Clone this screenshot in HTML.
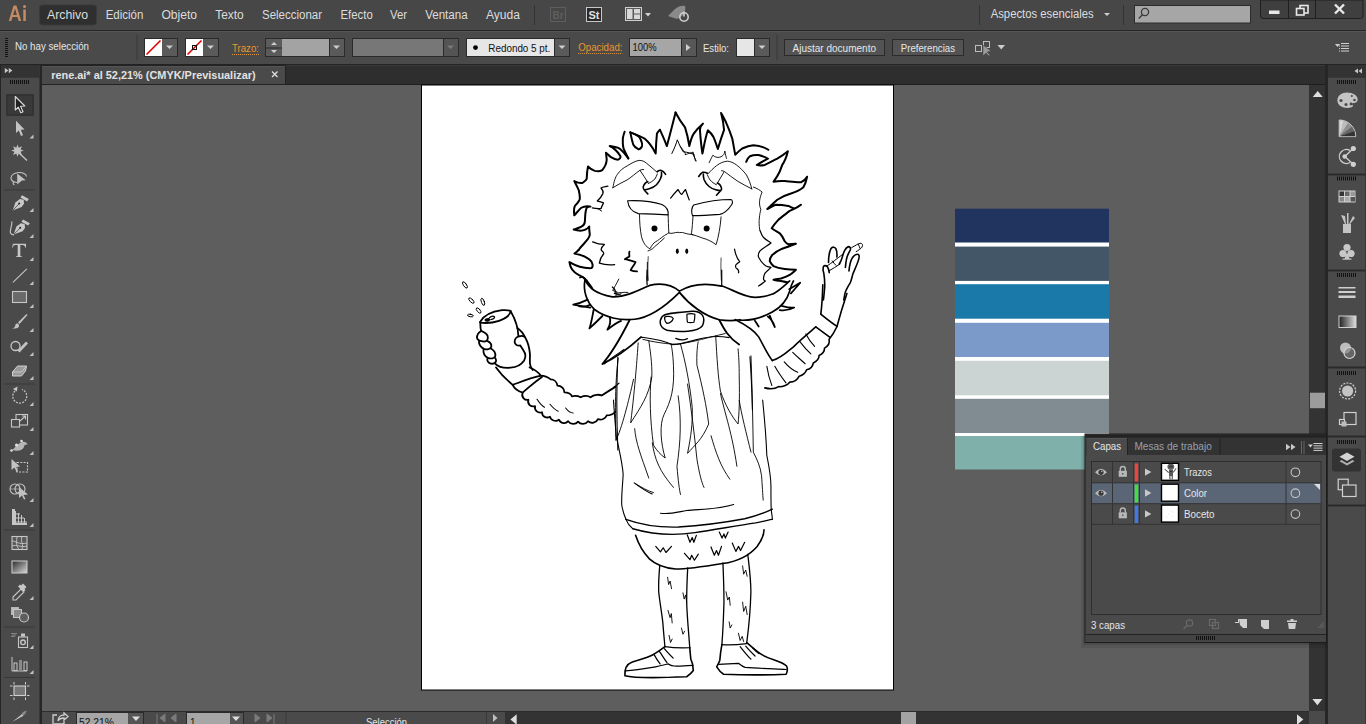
<!DOCTYPE html>
<html><head><meta charset="utf-8">
<style>
html,body{margin:0;padding:0;width:1366px;height:724px;overflow:hidden;background:#5e5e5e;}
svg{display:block;font-family:"Liberation Sans",sans-serif;}
.mt{fill:#dcdcdc;font-size:12.3px;}
.ct{fill:#e6e6e6;font-size:10px;}
.ic{fill:#b4b4b4;}
</style></head><body>
<svg width="1366" height="724" viewBox="0 0 1366 724">
<!-- ===== MENU BAR ===== -->
<rect x="0" y="0" width="1366" height="30" fill="#474747"/>
<rect x="0" y="30" width="1366" height="1" fill="#262626"/>
<path d="M8.8 21 L13.6 5.6 H16.4 L21.2 21 H18.7 L17.5 17 H12.5 L11.3 21 Z M13.1 14.9 H16.9 L15 8.4 Z" fill="#c58b63"/><rect x="23.3" y="9.5" width="2.5" height="11.5" fill="#c58b63"/><circle cx="24.55" cy="6.5" r="1.55" fill="#c58b63"/>
<rect x="39.5" y="5" width="57" height="20" rx="3" fill="#2f2f2f" stroke="#3a3a3a" stroke-width="1"/>
<text class="mt" x="47" y="19" textLength="41" lengthAdjust="spacingAndGlyphs">Archivo</text>
<text class="mt" x="105.7" y="19" textLength="37.7" lengthAdjust="spacingAndGlyphs">Edición</text>
<text class="mt" x="161.4" y="19" textLength="35.7" lengthAdjust="spacingAndGlyphs">Objeto</text>
<text class="mt" x="215.2" y="19" textLength="28.5" lengthAdjust="spacingAndGlyphs">Texto</text>
<text class="mt" x="262" y="19" textLength="60" lengthAdjust="spacingAndGlyphs">Seleccionar</text>
<text class="mt" x="340.5" y="19" textLength="32.3" lengthAdjust="spacingAndGlyphs">Efecto</text>
<text class="mt" x="390" y="19" textLength="17" lengthAdjust="spacingAndGlyphs">Ver</text>
<text class="mt" x="425.2" y="19" textLength="42.4" lengthAdjust="spacingAndGlyphs">Ventana</text>
<text class="mt" x="486" y="19" textLength="34" lengthAdjust="spacingAndGlyphs">Ayuda</text>
<rect x="534" y="5" width="1" height="20" fill="#333"/>
<rect x="979" y="5" width="1" height="20" fill="#333"/>
<rect x="1123" y="5" width="1" height="20" fill="#333"/>
<text class="mt" x="990.7" y="18" textLength="103" lengthAdjust="spacingAndGlyphs">Aspectos esenciales</text>
<path d="M1104 13h6l-3 3z" fill="#cfcfcf"/>
<rect x="1134.5" y="5.5" width="116" height="17.5" fill="#a6a6a6" stroke="#2c2c2c" stroke-width="1"/>
<circle cx="1145" cy="12" r="3.6" fill="none" stroke="#3a3a3a" stroke-width="1.3"/>
<path d="M1142.4 14.8 l-3.6 3.8" stroke="#3a3a3a" stroke-width="1.4"/>
<!-- Br / St / layout / rocket -->
<rect x="550.5" y="7.5" width="15" height="14" fill="none" stroke="#5e5e5e" stroke-width="1"/>
<text x="552.5" y="18.5" font-size="10px" font-weight="bold" fill="#5e5e5e" textLength="11" lengthAdjust="spacingAndGlyphs">Br</text>
<rect x="586.5" y="7.5" width="15" height="14" fill="#2a2a2a" stroke="#c8c8c8" stroke-width="1"/>
<text x="588.5" y="18.5" font-size="10px" font-weight="bold" fill="#e0e0e0" textLength="11" lengthAdjust="spacingAndGlyphs">St</text>
<rect x="625.5" y="7.5" width="16" height="13" fill="#5a5a5a" stroke="#cfcfcf" stroke-width="1"/>
<rect x="627" y="9" width="5.5" height="10" fill="#d8d8d8"/>
<rect x="634" y="9" width="6" height="4.5" fill="#d8d8d8"/>
<rect x="634" y="14.5" width="6" height="4.5" fill="#d8d8d8"/>
<path d="M645 13h6l-3 3.5z" fill="#d0d0d0"/>
<path d="M668 16 l7 -7 c3 -3 8 -4 10 -3 c1 2 0 7 -3 10 l-5 3 z" fill="#8a8a8a"/>
<circle cx="684" cy="17" r="4.2" fill="none" stroke="#cfcfcf" stroke-width="1.6"/>
<path d="M684 11.5 v5" stroke="#cfcfcf" stroke-width="1.6"/>


<!-- window buttons -->
<path d="M1260.5 0 V16 a2.5 2.5 0 0 0 2.5 2.5 H1360.5 a2.5 2.5 0 0 0 2.5 -2.5 V0 Z" fill="#3f3f3f" stroke="#1f1f1f" stroke-width="1"/>
<rect x="1288" y="0" width="1" height="18" fill="#1f1f1f"/>
<rect x="1315" y="0" width="1" height="18" fill="#1f1f1f"/>
<rect x="1269" y="10.5" width="10.5" height="3.5" fill="#e8e8e8"/>
<rect x="1300" y="5.5" width="8" height="7.5" fill="none" stroke="#e8e8e8" stroke-width="1.6"/>
<rect x="1296.5" y="8.5" width="7.5" height="6.5" fill="#3f3f3f" stroke="#e8e8e8" stroke-width="1.6"/>
<path d="M1335 4.5 l9 9 M1344 4.5 l-9 9" stroke="#e8e8e8" stroke-width="2.4"/>

<!-- ===== CONTROL BAR ===== -->
<rect x="0" y="31" width="1366" height="33" fill="#4a4a4a"/>
<rect x="0" y="31" width="1366" height="1" fill="#555"/>
<rect x="0" y="64" width="1366" height="1" fill="#232323"/>
<g fill="#141414"><rect x="5" y="38" width="3" height="1"/><rect x="5" y="40" width="3" height="1"/><rect x="5" y="42" width="3" height="1"/><rect x="5" y="44" width="3" height="1"/><rect x="5" y="46" width="3" height="1"/><rect x="5" y="48" width="3" height="1"/><rect x="5" y="50" width="3" height="1"/><rect x="5" y="52" width="3" height="1"/><rect x="5" y="54" width="3" height="1"/><rect x="5" y="56" width="3" height="1"/></g>
<text class="ct" x="15" y="49.7" textLength="74" lengthAdjust="spacingAndGlyphs">No hay selección</text>
<rect x="136.5" y="35" width="1" height="25" fill="#383838"/>
<!-- fill swatch -->
<rect x="144.5" y="38.5" width="33" height="18" fill="#5a5a5a" stroke="#2a2a2a"/>
<rect x="145" y="39" width="17" height="17" fill="#fff"/>
<path d="M146.5 54.5 L160.5 40.5" stroke="#e00000" stroke-width="1.6"/>
<path d="M166 45.5h7l-3.5 3.5z" fill="#cdcdcd"/>
<!-- stroke swatch -->
<rect x="185.5" y="38.5" width="33" height="18" fill="#5a5a5a" stroke="#2a2a2a"/>
<rect x="186" y="39" width="17" height="17" fill="#fff"/>
<path d="M187.5 54.5 L201.5 40.5" stroke="#e00000" stroke-width="1.6"/>
<rect x="192.5" y="45.5" width="4" height="4" fill="none" stroke="#111" stroke-width="1"/>
<path d="M207 45.5h7l-3.5 3.5z" fill="#cdcdcd"/>
<text x="232" y="52" font-size="10px" fill="#e8962e" textLength="27" lengthAdjust="spacingAndGlyphs">Trazo:</text>
<path d="M232 54.5h27" stroke="#e8962e" stroke-width="1" stroke-dasharray="1 1"/>
<rect x="265.5" y="38.5" width="79" height="18" fill="#5a5a5a" stroke="#2a2a2a"/>
<rect x="266" y="39" width="16" height="8.5" fill="#5c5c5c"/>
<rect x="266" y="47.5" width="16" height="1" fill="#2a2a2a"/>
<path d="M271 45h6l-3-3z M271 50h6l-3 3z" fill="#d0d0d0"/>
<rect x="282" y="39" width="47" height="17" fill="#a3a3a3"/>
<rect x="329" y="39" width="1" height="17" fill="#2a2a2a"/>
<path d="M333 45.5h7l-3.5 3.5z" fill="#cdcdcd"/>
<!-- disabled field -->
<rect x="352.5" y="38.5" width="106" height="18" fill="#545454" stroke="#2a2a2a"/>
<rect x="353" y="39" width="90" height="17" fill="#777"/>
<rect x="443" y="39" width="1" height="17" fill="#2a2a2a"/>
<path d="M447 45.5h7l-3.5 3.5z" fill="#7a7a7a"/>
<!-- brush -->
<rect x="466.5" y="38.5" width="103" height="18" fill="#5a5a5a" stroke="#2a2a2a"/>
<rect x="467" y="39" width="87" height="17" fill="#e6e6e6"/>
<rect x="554" y="39" width="1" height="17" fill="#2a2a2a"/>
<circle cx="475.5" cy="47.6" r="2.4" fill="#000"/>
<text x="488.3" y="51.6" font-size="10px" fill="#111" textLength="62" lengthAdjust="spacingAndGlyphs">Redondo 5 pt.</text>
<path d="M558.5 45.5h7l-3.5 3.5z" fill="#cdcdcd"/>
<text x="578.2" y="50.8" font-size="10px" fill="#e8962e" textLength="44.3" lengthAdjust="spacingAndGlyphs">Opacidad:</text>
<path d="M578.2 53.5h44.3" stroke="#e8962e" stroke-width="1" stroke-dasharray="1 1"/>
<rect x="629.5" y="38.5" width="67" height="18" fill="#575757" stroke="#2a2a2a"/>
<rect x="630" y="39" width="51" height="17" fill="#a6a6a6"/>
<rect x="681" y="39" width="1" height="17" fill="#2a2a2a"/>
<text x="632.5" y="50.8" font-size="10px" fill="#111" textLength="24" lengthAdjust="spacingAndGlyphs">100%</text>
<path d="M686 44v7l4.5-3.5z" fill="#cdcdcd"/>
<text class="ct" x="703" y="51.6" textLength="26" lengthAdjust="spacingAndGlyphs">Estilo:</text>
<rect x="736.5" y="38.5" width="33" height="18" fill="#5a5a5a" stroke="#2a2a2a"/>
<rect x="737" y="39" width="17" height="17" fill="#e6e6e6"/>
<rect x="754" y="39" width="1" height="17" fill="#2a2a2a"/>
<path d="M758.5 45.5h7l-3.5 3.5z" fill="#cdcdcd"/>
<rect x="776.5" y="35" width="1" height="25" fill="#383838"/>
<rect x="784.5" y="39.5" width="100" height="16" fill="#535353" stroke="#2a2a2a"/>
<text class="ct" x="792.5" y="51.8" textLength="83.5" lengthAdjust="spacingAndGlyphs">Ajustar documento</text>
<rect x="892.5" y="39.5" width="71" height="16" fill="#535353" stroke="#2a2a2a"/>
<text class="ct" x="900.8" y="51.8" textLength="54.2" lengthAdjust="spacingAndGlyphs">Preferencias</text>
<g fill="none" stroke="#bdbdbd" stroke-width="1"><rect x="975.5" y="45.5" width="6" height="6"/><rect x="983.5" y="41.5" width="6" height="6"/></g>
<path d="M983 45 L983 56 L986 53 L989 56 L990 55 L987 52 L991 51 Z" fill="#9a9a9a" stroke="#444" stroke-width="0.5"/>
<path d="M997.5 45h7.5l-3.75 4.5z" fill="#cdcdcd"/>
<g fill="#d0d0d0"><path d="M1335 44h5l-2.5 3z"/><rect x="1341" y="43" width="8" height="1"/><rect x="1341" y="45.5" width="8" height="1"/><rect x="1341" y="48" width="8" height="1"/><rect x="1341" y="50.5" width="8" height="1"/><rect x="1339" y="45.5" width="1" height="1"/><rect x="1339" y="48" width="1" height="1"/><rect x="1339" y="50.5" width="1" height="1"/></g>

<!-- ===== TAB BAR ===== -->
<rect x="0" y="65" width="1366" height="20" fill="#2e2e2e"/>
<rect x="42" y="84" width="1283" height="1" fill="#1e1e1e"/>
<rect x="42" y="65" width="1283" height="1" fill="#393939"/>
<rect x="41.5" y="65.5" width="244" height="19" fill="#4a4a4a" stroke="#232323"/>
<rect x="42" y="66" width="243" height="1" fill="#545454"/>
<text x="51.2" y="78.7" font-size="10px" font-weight="bold" fill="#e2e2e2" textLength="204.4" lengthAdjust="spacingAndGlyphs">rene.ai* al 52,21% (CMYK/Previsualizar)</text>
<path d="M272 71.5l5.5 5.5M277.5 71.5l-5.5 5.5" stroke="#e0e0e0" stroke-width="1.3"/>

<!-- ===== PASTEBOARD ===== -->
<rect x="42" y="85" width="1267" height="626" fill="#5e5e5e"/>
<rect x="421.5" y="85" width="472" height="605" fill="#ffffff" stroke="#000" stroke-width="1"/>
<!--DRAWING-->
<!-- R1: origin 555,105 scale 4.022 -->
<g transform="translate(555,105) scale(0.24863)" fill="none" stroke="#000" stroke-linecap="round" stroke-linejoin="round">
 <g stroke-width="2" vector-effect="non-scaling-stroke">
  <path vector-effect="non-scaling-stroke" stroke-width="2" d="M95,583 C110,560 140,540 140,521 C138,505 137,495 137.6,488.7 C125,505 105,510 75,501 C95,495 118,490 120,470 C122,450 120,430 127.6,413.7 C132,410 138,409 142.6,408.7 C125,405 105,410 100,418.7 C92,428 82,438 77.6,443.7 C76,430 75,415 80,406 C90,395 100,385 100,376 C100,360 97,350 95,341 C88,325 82,315 77.6,306 C85,310 100,315 110,313.7 C122,305 127,300 127.6,296 C128,280 130,260 132.8,247.5 C140,255 150,262 160,265 C175,268 185,265 190,262 C200,250 207,235 208,220 C207,210 206,200 205,192 C212,198 218,205 225,210 C235,216 245,220 252.8,220 C262,218 265,210 262.8,205 C250,185 235,172 220,165 C235,168 245,170 255,172.5 C265,178 270,185 275,190 C283,200 290,208 295,215"/>
  <path vector-effect="non-scaling-stroke" stroke-width="2" d="M280,107.5 C274,125 272,135 272.8,140 C272,160 274,172 277.8,180 C284,195 290,205 295,215"/>
  <path vector-effect="non-scaling-stroke" stroke-width="2" d="M302.8,110 C318,115 332,122 340,130 C348,145 352,158 350,165 C346,175 340,178 335,177.5 C325,173 318,166 315,160 C310,145 306,125 302.8,110 Z"/>
  <path vector-effect="non-scaling-stroke" stroke-width="2" d="M302.8,110 C330,120 350,128 360,135 C378,150 395,175 405,195 C406,165 408,135 410,115 C414,108 418,103 422,100"/>
  <path vector-effect="non-scaling-stroke" stroke-width="2" d="M422,100 C432,120 442,145 450,165 C462,120 475,70 485,30"/>
 </g>
 <g>
  <path vector-effect="non-scaling-stroke" stroke-width="1.1" d="M292,385 C340,383 400,390 430,400 C450,410 457,425 455,442 C420,440 370,438 335,437 C310,430 295,410 292,385 Z"/>
  <path vector-effect="non-scaling-stroke" stroke-width="0.9" d="M340,440 C340,470 342,500 348,530 C355,555 365,570 382,578 C390,565 395,555 405,550 C415,545 425,535 440,525 C450,520 455,515 458,515 C456,490 456,460 455,442"/>
  <path vector-effect="non-scaling-stroke" stroke-width="0.9" d="M458,515 C470,520 480,512 495,512 C505,515 510,510 520,515 C535,520 545,520 555,522"/>
  <path vector-effect="non-scaling-stroke" stroke-width="1.2" d="M465,375 C475,362 485,350 495,340 C500,350 505,358 510,360 C515,352 520,345 525,340 C530,355 535,370 540,382"/>
  <path vector-effect="non-scaling-stroke" stroke-width="0.7" d="M375,610 C373,640 373,670 375,705"/>
  <path vector-effect="non-scaling-stroke" stroke-width="1" d="M470,195 C480,175 488,155 492,140 C500,160 508,175 515,188 C535,190 550,195 560,200 M555,190 C560,205 562,215 565,225 "/>
 </g>
 <g fill="#000" stroke="none">
  <circle cx="400" cy="497" r="12"/>
  <ellipse cx="492" cy="588" rx="6" ry="11"/>
  <ellipse cx="530" cy="588" rx="6" ry="11"/>
 </g>
</g>

<!-- R2: origin 690,105 scale 4.022 -->
<g transform="translate(690,105) scale(0.24863)" fill="none" stroke="#000" stroke-linecap="round" stroke-linejoin="round">
  <path vector-effect="non-scaling-stroke" stroke-width="2" d="M-58,30 C-45,55 -28,80 -20,90 C-10,120 -5,150 -2.7,165 C2,145 8,125 15,115 C25,100 40,85 52,75 C45,82 40,90 40,100 C42,130 46,170 50,195 C56,165 63,125 72,102 C82,110 90,120 95,130 C102,145 108,165 112,177 C120,150 128,125 137,100 C135,75 130,50 125,32 C135,50 142,62 147,75 C158,100 165,120 170,135 C175,160 178,180 182,200 C192,190 200,182 210,175 C225,168 240,163 255,162 C275,163 300,170 315,180"/>
  <path vector-effect="non-scaling-stroke" stroke-width="2" d="M226,228.5 C230,218 235,210 241,206 C255,200 265,200 276,201 C290,205 305,210 313.6,216 C300,222 292,228 286,231 C278,236 272,238 268.6,241 C280,245 290,244 301,241 C320,232 338,222 351,216 C370,205 383,195 393.6,186 C388,210 380,228 371,241 C365,260 358,275 351,286 C345,295 340,302 336,308.5 C350,306 365,305 381,306 C410,309 430,312 446,311 C458,305 466,298 471,288.5 C468,305 462,320 456,331 C440,345 425,350 406,356 C385,362 365,372 351,381 C335,395 320,410 311,418.5 C325,410 335,404 346,401 C365,401 385,404 396,406 C405,410 413,415 421,416 C432,412 440,406 446,401 C432,412 415,420 401,426 C385,438 370,450 356,461 C345,473 335,485 328.6,496 C340,505 352,510 361,516 C370,525 375,535 381,548 C386,555 390,558 396,560 C408,560 418,559 426,558 C408,565 390,572 371,578 C355,585 340,595 331,603 C324,612 320,620 321,628 C325,638 330,643 336,648 C350,655 365,658 381,660 C395,662 410,663 426,663 C418,670 410,678 401,683 C390,690 378,694 366,698 C355,700 345,702 336,703 C345,706 355,707 366,708 C375,710 383,712 391,713"/>
  <path vector-effect="non-scaling-stroke" stroke-width="0.9" d="M-40,165 C-25,185 -15,195 -20,200 C-5,195 5,192 10,190 C15,205 20,215 25,225 M77,232 C85,215 90,205 92,202 C100,210 110,212 120,210 C135,205 140,195 140,185 C143,200 145,210 147,215"/>
  <!-- right brow -->
  <path vector-effect="non-scaling-stroke" stroke-width="1.1" d="M10,445 C5,430 5,415 15,402 C60,390 120,380 165,380 C172,382 172,395 168,400 C155,420 140,435 120,440 C80,443 40,445 10,445 Z"/>
  <!-- right eye -->
  <path vector-effect="non-scaling-stroke" stroke-width="0.9" d="M12,448 C10,480 8,505 5,520 C20,525 35,528 50,535 C70,540 90,550 105,562 C115,530 122,490 125,450"/>
  <path vector-effect="non-scaling-stroke" stroke-width="0.7" d="M125,615 C124,640 124,670 126,705"/>
  <circle cx="67" cy="497" r="12" fill="#000" stroke="none"/>
  <!-- side fur -->
  <path vector-effect="non-scaling-stroke" stroke-width="0.9" d="M255,330 C270,335 285,345 290,350 C280,375 275,395 285,420 C280,440 275,465 280,500"/>
  <path vector-effect="non-scaling-stroke" stroke-width="1.2" d="M179,580 C185,610 195,625 200,630 C185,640 180,645 185,655 C190,660 200,665 195,675"/>
</g>

<!-- R3: origin 455,270 scale 4.022 -->
<g transform="translate(455,270) scale(0.24863)" fill="none" stroke="#000" stroke-linecap="round" stroke-linejoin="round">
  <g stroke-width="1" >
  <ellipse vector-effect="non-scaling-stroke" stroke-width="1" cx="40" cy="60" rx="6" ry="15" transform="rotate(-35 40 60)"/>
  <ellipse vector-effect="non-scaling-stroke" stroke-width="1" cx="66" cy="123" rx="6" ry="14" transform="rotate(-45 66 123)"/>
  <ellipse vector-effect="non-scaling-stroke" stroke-width="1" cx="112" cy="128" rx="6" ry="15" transform="rotate(-20 112 128)"/>
  <ellipse vector-effect="non-scaling-stroke" stroke-width="1" cx="95" cy="163" rx="6" ry="13" transform="rotate(-40 95 163)"/>
  <ellipse vector-effect="non-scaling-stroke" stroke-width="1" cx="62" cy="183" rx="5" ry="12" transform="rotate(-80 62 183)"/>
  </g>
  <!-- wrist / cuff -->
  <path vector-effect="non-scaling-stroke" stroke-width="1.8" d="M165,392 C185,420 205,440 232,462 M300,392 C320,400 335,410 345,425 M232,462 C265,450 300,435 345,425 M272,493 C300,470 320,450 350,430"/>
  <!-- sleeve outer bumpy edge -->
  <path vector-effect="non-scaling-stroke" stroke-width="1.8" d="M232,462 C240,480 255,488 272,493 C265,510 280,525 295,522 C290,540 305,552 322,548 C318,565 335,578 350,572 C350,590 368,598 382,590 C385,605 405,612 418,602 C425,618 445,620 455,608 C465,622 485,622 495,610 C505,622 525,622 535,608 C548,620 568,615 575,600 C590,605 605,598 610,585 C625,585 638,578 645,570"/>
  <path vector-effect="non-scaling-stroke" stroke-width="1.8" d="M345,425 C360,425 375,432 385,440 C400,440 410,452 412,465 C428,465 440,478 440,492 C455,492 468,500 470,508 C485,505 498,508 505,512 C520,505 535,505 545,512 C560,500 580,500 590,505 C605,495 620,485 645,470"/>
  <path vector-effect="non-scaling-stroke" stroke-width="1.1" d="M330,520 C340,535 350,548 360,552 M382,540 C395,555 405,565 415,568 M445,555 C455,568 465,575 475,575"/>
  <!-- beard left & body edge -->
  <path vector-effect="non-scaling-stroke" stroke-width="1.1" d="M600,378 C625,355 650,340 680,320 M655,350 C650,450 648,550 655,724 M640,470 C650,465 655,460 660,455"/>
</g>

<!-- CAN: origin 470,300 scale 10.34 -->
<g transform="translate(470,300) scale(0.096712)" fill="none" stroke="#000" stroke-linecap="round" stroke-linejoin="round">
  <path vector-effect="non-scaling-stroke" stroke-width="1.8" d="M108,222 C140,165 220,120 330,105 C370,102 405,105 420,115 C415,150 370,190 300,215 C240,235 170,242 108,235 C100,232 102,226 108,222 Z"/>
  <path vector-effect="non-scaling-stroke" stroke-width="1.8" d="M420,115 C440,150 465,200 480,250 C490,280 497,320 500,370 M108,235 C106,260 108,290 115,320"/>
  <path d="M150,205 C155,190 180,182 200,188 C215,195 212,215 190,222 C170,228 148,222 150,205 Z" fill="#000" stroke="none"/>
  <path vector-effect="non-scaling-stroke" stroke-width="1.3" d="M200,185 C210,168 240,162 252,172 C260,185 240,200 215,202" fill="#fff"/>
  <path vector-effect="non-scaling-stroke" stroke-width="1.8" d="M115,320 C90,335 72,360 72,390 C75,415 100,428 150,430 C180,425 190,400 182,370 C170,345 140,330 115,320 Z"/>
  <path vector-effect="non-scaling-stroke" stroke-width="1.8" d="M92,422 C92,455 110,490 145,505 C175,515 210,510 220,485 C225,455 205,435 182,425"/>
  <path vector-effect="non-scaling-stroke" stroke-width="1.8" d="M140,505 C135,540 150,580 185,598 C215,610 250,605 262,580 C265,550 245,520 220,505"/>
  <path vector-effect="non-scaling-stroke" stroke-width="1.8" d="M182,598 C172,625 185,650 215,658 C240,662 265,655 270,630 C270,615 262,600 255,595"/>
  <path vector-effect="non-scaling-stroke" stroke-width="1.8" d="M262,660 C290,690 350,705 420,700 C480,695 530,670 560,625 C572,600 575,575 570,555"/>
  <path vector-effect="non-scaling-stroke" stroke-width="1.8" d="M490,290 C520,310 550,345 575,395 C600,440 615,500 620,560 C622,610 612,640 625,680 C632,700 640,715 650,724"/>
  <path vector-effect="non-scaling-stroke" stroke-width="1.8" d="M510,375 C480,380 460,405 462,435 C465,462 490,475 520,470 C540,500 560,530 570,555 M510,375 C530,370 552,372 562,380"/>
</g>

<!-- R4: origin 580,270 scale 4.022  mustache, mouth -->
<g transform="translate(580,270) scale(0.24863)" fill="none" stroke="#000" stroke-linecap="round" stroke-linejoin="round">
  <path vector-effect="non-scaling-stroke" stroke-width="1.7" d="M20,40 C35,70 60,95 130,108 C180,110 230,85 280,62 C330,50 370,60 400,85 C440,60 500,50 570,65"/>
  <path vector-effect="non-scaling-stroke" stroke-width="1.7" d="M20,40 C12,80 25,130 60,160 C100,190 160,205 220,198 C290,190 350,140 400,90 C440,140 500,185 560,200 C600,206 620,204 643,200"/>
  <path vector-effect="non-scaling-stroke" stroke-width="1.8" d="M0,30 C10,25 18,30 20,40 M40,140 C25,150 10,148 -5,145 M55,160 C50,185 45,215 38,235 C60,215 75,200 90,185 M120,190 C125,210 120,225 110,240 C130,225 150,210 165,205"/>
  <path vector-effect="non-scaling-stroke" stroke-width="1.2" d="M130,68 C140,75 145,85 140,95 C150,98 160,100 165,95 M270,0 C268,20 268,40 270,60 M570,0 C570,20 570,40 570,62"/>
  <!-- mouth -->
  <path vector-effect="non-scaling-stroke" stroke-width="1.5" d="M330,188 C340,172 400,170 450,166 C490,164 508,190 492,225 C475,250 400,252 350,242 C318,232 318,205 330,188 Z"/>
  <path vector-effect="non-scaling-stroke" stroke-width="1.2" d="M340,190 C345,185 370,185 375,195 C372,205 368,212 350,215 C343,210 340,200 340,190 Z M430,178 C440,175 455,175 462,178 C462,195 460,205 458,210 C450,212 440,212 432,210 C430,200 430,190 430,178 Z"/>
  <path vector-effect="non-scaling-stroke" stroke-width="1.2" d="M385,275 C400,282 420,282 432,276"/>
  <!-- beard left edge -->
  <path vector-effect="non-scaling-stroke" stroke-width="1.8" d="M200,200 C175,250 140,320 90,378 C140,355 190,320 245,270"/>
  <!-- beard right edge -->
  <path vector-effect="non-scaling-stroke" stroke-width="1.8" d="M560,200 C580,240 600,275 640,300"/>
  <path vector-effect="non-scaling-stroke" stroke-width="1.1" d="M245,270 C280,275 330,280 370,300 C400,300 440,288 470,280 C510,270 545,262 600,272"/>
</g>
<!-- R5: beard, origin 610,330 scale 4.256 -->
<g transform="translate(610,330) scale(0.23497)" fill="none" stroke="#000" stroke-linecap="round" stroke-linejoin="round">
  <g>
  <path vector-effect="non-scaling-stroke" stroke-width="0.9" d="M120,55 C115,120 108,230 88,395 C130,330 165,280 178,200 C180,140 170,80 165,45"/>
  <path vector-effect="non-scaling-stroke" stroke-width="0.9" d="M175,200 C168,280 170,380 185,490 C200,515 215,530 235,545 C215,480 210,400 230,360 C260,300 275,250 270,150 C268,100 262,70 260,60"/>
  <path vector-effect="non-scaling-stroke" stroke-width="0.9" d="M300,60 C320,130 340,230 350,330 C352,400 345,450 330,525 C360,490 390,470 420,400 C410,320 395,250 370,150 C368,100 372,70 375,50"/>
  <path vector-effect="non-scaling-stroke" stroke-width="0.9" d="M450,25 C455,120 460,200 470,260 C490,320 520,370 545,400 C550,350 552,300 550,200 C550,150 548,110 545,80"/>
  <path vector-effect="non-scaling-stroke" stroke-width="0.9" d="M35,120 C25,200 20,300 25,470 C50,420 80,300 100,210"/>
  <path vector-effect="non-scaling-stroke" stroke-width="0.9" d="M105,420 C110,480 130,530 165,630 M180,480 C190,550 210,600 270,670 M290,280 C305,380 300,480 285,580 C290,640 295,680 300,700 M330,230 C345,330 360,450 370,550 C380,610 390,650 400,670 M430,450 C450,520 470,580 510,635 M470,270 C490,360 520,440 540,580 M550,300 C560,360 580,440 600,520"/>
  <path vector-effect="non-scaling-stroke" stroke-width="0.9" d="M140,40 C180,50 230,58 265,60 C290,62 310,58 320,55 C350,50 380,42 390,40 C420,32 450,25 490,15"/>
  <path vector-effect="non-scaling-stroke" stroke-width="0.9" d="M600,110 C605,250 608,400 610,520 C625,550 640,580 645,620 C648,660 650,700 652,724"/>
  <path vector-effect="non-scaling-stroke" stroke-width="0.9" d="M110,655 C135,670 160,685 185,692"/>
  </g>
</g>
<!-- R6: body bottom, origin 590,400 scale 3.62 -->
<g transform="translate(590,400) scale(0.27624)" fill="none" stroke="#000" stroke-linecap="round" stroke-linejoin="round">
  <path vector-effect="non-scaling-stroke" stroke-width="1.1" d="M85,0 C88,50 92,90 95,130 C105,180 118,230 120,270 C118,310 113,350 115,380 C118,400 125,420 130,432 C135,445 145,458 155,466"/>
  <path vector-effect="non-scaling-stroke" stroke-width="1.1" d="M625,0 C632,70 638,140 640,200 C648,240 655,280 655,310 C655,340 655,370 656,395 C657,410 660,420 660,432"/>
  <path vector-effect="non-scaling-stroke" stroke-width="1.4" d="M130,432 C180,450 250,462 320,460 C400,455 480,445 560,430 C600,420 640,405 660,395 M155,466 C220,485 300,492 380,480 C450,470 530,455 600,445 C630,440 650,432 660,432"/>
  <path vector-effect="non-scaling-stroke" stroke-width="1.1" d="M255,410 C290,415 320,405 350,400 C400,395 470,395 520,378 M160,300 C180,315 200,330 225,340"/>
  <path vector-effect="non-scaling-stroke" stroke-width="1.6" d="M165,490 C175,520 190,550 215,575 C240,598 270,608 310,612 C360,612 420,602 480,592 C530,585 575,565 605,530 C620,510 630,490 630,470"/>
  <path vector-effect="non-scaling-stroke" stroke-width="1.2" d="M352,488 L362,515 L370,498 L376,515 L385,490 M468,478 L478,500 L485,485 L490,500 L500,478 M238,530 L255,550 L265,535 L275,552 L295,530 M342,555 L362,578 L368,562 L378,580 L392,558 M438,532 L450,562 L458,545 L465,562 L476,530 M515,518 L528,548 L538,530 L545,545 L560,515"/>
</g>

<!-- R7: right arm, origin 740,230 scale 4.022 -->
<g transform="translate(740,230) scale(0.24863)" fill="none" stroke="#000" stroke-linecap="round" stroke-linejoin="round">
  <!-- mustache right lobe -->
  <path vector-effect="non-scaling-stroke" stroke-width="1.7" d="M-73.6,225.2 C-40,233 10,270 60,271 C95,271 115,263 134.7,256 C160,243 180,222 200,205"/>
  <path vector-effect="non-scaling-stroke" stroke-width="1.7" d="M-0.4,362.6 C40,365 90,352 130,330 C165,310 190,280 200,245 C203,232 208,218 215,205"/>
  <path vector-effect="non-scaling-stroke" stroke-width="1.8" d="M198,238 C215,228 228,220 242,212 C232,225 222,235 205,255 M168,305 C185,310 200,315 218,312 C200,322 185,325 160,322 M120,345 C125,360 132,375 140,390 C135,372 128,360 112,348 M60,365 C65,372 70,380 75,388"/>
  <!-- beard right edge -->
  <path vector-effect="non-scaling-stroke" stroke-width="1.6" d="M-20,360 C20,380 55,400 75,430 C95,465 110,500 130,525"/>
  <path vector-effect="non-scaling-stroke" stroke-width="1.1" d="M40,510 C45,580 48,650 50,724"/>
  <!-- sleeve -->
  <path vector-effect="non-scaling-stroke" stroke-width="1.6" d="M130,525 C160,518 185,495 215,470 C240,445 270,420 305,390"/>
  <path vector-effect="non-scaling-stroke" stroke-width="1.6" d="M388,392 C380,410 370,425 358,440 C362,455 352,468 340,475 C340,490 330,500 318,505 C318,520 305,530 295,535 C292,550 280,560 268,562 C262,578 250,585 238,588 C230,605 215,612 200,612 C190,625 170,632 155,630 C140,640 120,640 100,635"/>
  <path vector-effect="non-scaling-stroke" stroke-width="1.1" d="M265,418 C275,438 288,455 300,468 M240,448 C255,468 270,485 285,498 M212,492 C230,510 248,525 262,538 M178,530 C195,550 215,565 232,572 M140,548 C155,575 172,598 185,615 M108,548 C112,575 118,600 128,625"/>
  <!-- cuff -->
  <path vector-effect="non-scaling-stroke" stroke-width="1.6" d="M325,338 C345,355 368,372 390,388 M305,390 C325,405 345,420 362,432"/>
  <!-- forearm -->
  <path vector-effect="non-scaling-stroke" stroke-width="1.6" d="M325,338 C330,300 332,260 333,220 M390,388 C400,350 415,300 430,255"/>
</g>

<!-- H: hand, origin 805,235 scale 11.138 -->
<g transform="translate(805,235) scale(0.089783)" fill="none" stroke="#000" stroke-linecap="round" stroke-linejoin="round">
  <path vector-effect="non-scaling-stroke" stroke-width="1.6" d="M205,724 C212,660 220,600 220,560 C220,500 215,460 210,430 C200,400 198,370 205,350 C215,338 235,338 248,352 C258,365 265,385 270,420"/>
  <path vector-effect="non-scaling-stroke" stroke-width="1.6" d="M262,305 C262,250 270,190 290,150 C305,130 330,130 345,155 C355,180 358,215 355,245"/>
  <path vector-effect="non-scaling-stroke" stroke-width="1.6" d="M380,325 C400,300 410,270 420,230 C430,190 450,145 480,130 C500,128 510,145 505,165 C485,200 465,240 460,280 C455,310 452,340 450,360"/>
  <path vector-effect="non-scaling-stroke" stroke-width="1.6" d="M490,400 C495,340 505,290 530,250 C550,222 575,210 595,218 C610,228 605,250 595,280 C580,330 555,380 535,430 C525,460 520,490 505,530 C480,570 455,610 445,650 C440,680 435,700 432,724"/>
  <path vector-effect="non-scaling-stroke" stroke-width="1" d="M245,345 C300,310 360,260 420,215 M270,398 C310,375 350,350 392,322 M305,290 C315,305 330,325 345,338 M520,140 C560,120 590,95 615,92 C640,92 648,110 635,135 C620,155 595,170 570,185 M595,105 C602,120 608,135 612,148"/>
</g>

<!-- R8: legs, origin 610,540 scale 4.826 -->
<g transform="translate(610,540) scale(0.20721)" fill="none" stroke="#000" stroke-linecap="round" stroke-linejoin="round">
  <path vector-effect="non-scaling-stroke" stroke-width="1.3" d="M240,125 C236,170 234,220 235,250 C240,300 250,350 255,400 C258,440 262,480 265,515 M375,135 C372,190 370,250 370,300 C372,370 380,450 385,520"/>
  <path vector-effect="non-scaling-stroke" stroke-width="1.3" d="M545,110 C548,180 550,240 550,300 C548,370 545,440 540,505 M665,70 C672,130 680,190 680,250 C678,330 670,420 660,495"/>
  <path vector-effect="non-scaling-stroke" stroke-width="1.6" d="M265,515 C245,530 225,545 205,555 C180,568 140,578 105,590 C80,600 70,625 72,655 C110,665 250,665 370,660 C385,650 395,640 402,630 C402,610 398,590 390,575 C388,555 386,535 385,520"/>
  <path vector-effect="non-scaling-stroke" stroke-width="1.2" d="M265,515 C300,520 340,522 385,520 M75,632 C120,628 170,620 220,612 C245,608 268,600 282,598 C300,612 330,610 400,605 M212,552 C222,570 232,585 242,598 M238,536 C250,555 262,575 275,592 M262,524 C275,540 290,555 305,570"/>
  <path vector-effect="non-scaling-stroke" stroke-width="1.6" d="M540,505 C535,530 532,555 530,580 C525,595 518,605 515,612 C525,628 535,640 548,648 C650,652 760,652 850,648 C856,635 858,620 852,608 C840,595 820,588 790,578 C760,568 730,555 710,538 C695,525 678,510 660,495"/>
  <path vector-effect="non-scaling-stroke" stroke-width="1.2" d="M540,505 C580,508 620,505 660,500 M525,600 C560,598 600,596 620,595 C632,605 642,612 652,615 C720,620 790,622 850,625 M628,515 C645,535 660,555 680,575 M655,512 C670,530 685,545 700,560 M688,520 C698,530 708,540 718,548"/>
  <path vector-effect="non-scaling-stroke" stroke-width="0.9" d="M278,180 L283,215 L290,198 L297,235 M280,340 L290,375 L296,355 L300,400 M352,255 L358,285 L365,265 L370,300 M345,425 L352,455 L360,440 M285,460 L292,495 L300,478 M640,125 L645,165 L655,145 L662,175 M560,250 L568,290 L576,275 L580,315 M640,300 L645,345 L655,320 L662,360 M575,395 L580,425 L588,410 M620,450 L628,485 L638,465 L645,490"/>
</g>

<!-- R9: lower-left hair, origin 555,235 scale 6.582 -->
<g transform="translate(555,235) scale(0.15193)" fill="none" stroke="#000" stroke-linecap="round" stroke-linejoin="round">
  <path vector-effect="non-scaling-stroke" stroke-width="2" d="M155,99 C145,110 135,118 128,122 C170,130 215,145 240,175 C250,195 248,212 240,218 C200,220 150,210 95,178 C100,215 120,245 155,262 C185,275 205,290 215,310 C228,325 238,340 245,352"/>
  <path vector-effect="non-scaling-stroke" stroke-width="1.3" d="M248,45 C270,55 295,62 325,62 C310,75 300,85 305,100 C315,110 325,118 320,125 C305,140 295,160 292,185 C320,195 350,200 392,195"/>
  <path vector-effect="non-scaling-stroke" stroke-width="1.8" d="M460,160 C475,150 485,145 490,140 C488,128 487,118 490,110 M470,160 C490,165 510,170 530,178 C520,200 505,215 498,232 C510,238 525,240 540,240"/>
  <path vector-effect="non-scaling-stroke" stroke-width="0.9" d="M420,290 C405,320 390,345 380,365 C392,370 402,372 410,375 C405,385 402,395 400,405 M390,385 C420,380 455,375 480,378"/>
  <path vector-effect="non-scaling-stroke" stroke-width="1.8" d="M215,425 C185,440 150,452 120,458 C160,465 200,472 232,478"/>
  <path vector-effect="non-scaling-stroke" stroke-width="0.9" d="M612,105 C625,100 640,95 655,78 C675,60 700,40 720,20 M608,180 C607,220 607,260 610,300"/>
</g>

<!-- horns (src coords) -->
<g fill="none" stroke="#000" stroke-linecap="round" stroke-linejoin="round">
  <path stroke-width="0.9" d="M612.9,187.7 C614,181 615.5,177 617.2,174.6 C620,170.5 623,168 627.2,165.9 C631,163.5 635,161 639.1,160.4 C642,160.2 644.5,161.5 646.6,163.3 C650,166 654,169.5 657.3,172.4"/>
  <path stroke-width="0.9" d="M612.9,187.7 C617,185 622,182.5 627,180 C631,177.5 636,173 639.9,170.3 C641,169.6 642.5,169.4 643.7,169.5 M639.9,170.3 C642.5,174 645.5,178.5 647.8,182.3"/>
  <path stroke-width="1.6" d="M657.3,171.5 C658.5,170.8 659.5,170.3 660.7,170.3 C662.5,170.8 664.5,172.5 665.6,174.4"/>
  <path stroke-width="1.6" d="M661.5,172.4 C661.8,174.5 661.5,176.5 660.7,178.2 C659.5,181 658,183.2 656.5,184.8 C654.5,186.8 652.2,187.8 649.9,188.5 C647.8,189.2 645.9,189.7 644.1,189.8 C643.2,188.8 643,187.5 643.3,186.5 C643.8,185 644.5,184 645.3,183.1 C646.2,182.4 647,181.9 647.8,181.5 M644.1,189.8 C645.2,191.2 646.5,192.6 647.8,193.9"/>
  <path stroke-width="0.9" d="M657.3,174 C656.6,175.8 655.9,177.5 654.9,179 C653,181 650.5,182.5 648.2,183.6"/>
  <path stroke-width="0.9" d="M707.8,174 C710.5,171 713.5,168 716.5,165.7 C720,163 723.5,161.5 727.3,161.2 C730.5,161.3 733.5,162.8 736.4,164.9 C740,167.5 743.5,171 746.4,174.9 C748.8,179 750.6,184 751.8,188.9"/>
  <path stroke-width="0.9" d="M751.8,188.9 C747,186.5 742.5,184 738.1,181.5 C733.5,178.5 729,175 724.4,171.5 C723.5,171 722.5,170.7 721.5,170.7 M724,172 C721.8,175.5 719.5,179.5 717.4,183.1"/>
  <path stroke-width="1.6" d="M698.7,176.5 C699.8,174.8 701,173.2 702.5,172.4 C704.2,172.1 705.9,172.5 707.4,173.2"/>
  <path stroke-width="1.6" d="M703.3,174 C703.3,176 703.5,178 704.1,179.8 C705.2,182.5 707,184.8 709.1,186.5 C711,188 713.3,189.2 715.7,189.8 C717.5,190.3 719.2,190.7 720.7,190.6 C721.5,189.9 721.8,189 721.5,188.1 C721.1,186.8 720.5,185.7 719.9,184.8 C719.1,184 718.3,183.5 717.4,183.1 M720.7,190.6 C719.3,192.3 717.9,193.8 716.5,195.2"/>
  <path stroke-width="0.9" d="M707.4,174.9 C708.2,176.6 709,178.3 709.9,179.8 C711.8,182 714,183.6 716.5,184.8"/>
</g>

<!-- misc src-coord fur lines -->
<g fill="none" stroke="#000" stroke-linecap="round" stroke-linejoin="round">
  <path stroke-width="1.2" d="M759.8,230 C761,233 762,236 763.6,237.5 C766,240 769,241.5 771,243 C767,246 762,248.5 759.8,251.1 C758.5,253 758,255.5 758.6,257.3 C760.5,261 763,264 766,266 C767.5,266.8 769.5,267 771,267.3 C769,269.5 766.5,271.5 764.8,273.5 C763.8,275.5 763.4,277.8 763.6,279.7 C764.2,280.4 764.8,280.8 765.4,281 C763,283 760.5,284.8 758.6,286"/>
  <path stroke-width="1.3" d="M607.9,186.1 C604.5,186.6 602,187.3 601,188 C602.8,190 603.5,192 602.9,193.6 C601.5,196.5 599.5,199 597.3,201 C599.5,201.6 601.8,202.2 603.5,202.9 C602.5,205 601.5,207 601,208.5 C598,208.7 595,208.5 592.3,207.9"/>
  <path stroke-width="1" d="M597.3,208.5 C599,209.3 600.5,210.2 601.6,211"/>
</g>

<!--/DRAWING-->

<!-- ===== LEFT TOOLBAR ===== -->
<rect x="0" y="65" width="42" height="659" fill="#262626"/>
<rect x="1" y="65" width="38.5" height="659" fill="#4a4a4a"/>
<rect x="1" y="65" width="38.5" height="11.5" fill="#333"/>
<rect x="1" y="76.5" width="38.5" height="1" fill="#262626"/>
<path d="M4.8 68v5.2l3.6-2.6z M8.8 68v5.2l3.6-2.6z" fill="#c8c8c8"/>
<g fill="#111"><rect x="10" y="80" width="1" height="4"/><rect x="12" y="80" width="1" height="4"/><rect x="14" y="80" width="1" height="4"/><rect x="16" y="80" width="1" height="4"/><rect x="18" y="80" width="1" height="4"/><rect x="20" y="80" width="1" height="4"/><rect x="22" y="80" width="1" height="4"/><rect x="24" y="80" width="1" height="4"/><rect x="26" y="80" width="1" height="4"/><rect x="28" y="80" width="1" height="4"/></g>
<g fill="#383838"><rect x="4" y="189.5" width="31" height="1"/><rect x="4" y="383.5" width="31" height="1"/><rect x="4" y="529.5" width="31" height="1"/><rect x="4" y="626.5" width="31" height="1"/><rect x="4" y="677" width="31" height="1"/></g>
<rect x="6" y="94" width="28" height="22" fill="#333"/>
<rect x="8" y="96" width="24" height="18" fill="#393939"/>
<path d="M15.3 96.5 L15.3 110 L18.3 107.2 L20.8 112.8 L23 111.8 L20.6 106.3 L24.8 106 Z" fill="#222" stroke="#dcdcdc" stroke-width="1.1" stroke-linejoin="round"/>
<g fill="#c2c2c2" stroke="none"><path d="M33.5 134.5v4h-4z"/><path d="M33.5 208v4h-4z"/><path d="M33.5 234v4h-4z"/><path d="M33.5 257v4h-4z"/><path d="M33.5 281v4h-4z"/><path d="M33.5 304v4h-4z"/><path d="M33.5 328v4h-4z"/><path d="M33.5 352v4h-4z"/><path d="M33.5 376v4h-4z"/><path d="M33.5 402v4h-4z"/><path d="M33.5 427v4h-4z"/><path d="M33.5 451v4h-4z"/><path d="M33.5 498v4h-4z"/><path d="M33.5 523v4h-4z"/><path d="M33.5 596v4h-4z"/><path d="M33.5 645v4h-4z"/><path d="M33.5 670v4h-4z"/>
<!-- direct select -->
<path d="M16 120.7 L16 133 L18.8 130.5 L21 136 L23 135.2 L20.8 129.8 L24.5 129.5 Z"/>
<!-- magic wand -->
<path d="M17.5 144.5 l1.2 3.2 3.3 -1.5 -1.5 3.2 3.3 1.2 -3.3 1.2 1.5 3.3 -3.3 -1.5 -1.2 3.2 -1.2 -3.2 -3.3 1.5 1.5 -3.3 -3.3 -1.2 3.3 -1.2 -1.5 -3.2 3.3 1.5z"/>
<path d="M19.5 152.5 l8 7.5 -1 1 -8 -7.5z"/>
<!-- lasso -->
<path d="M17.2 173.5 l8.5 6.8 -3.8 0.3 -4.7 4z"/>
</g>
<g fill="none" stroke="#c2c2c2" stroke-width="1.1">
<path d="M17 182.5 c-4 -0.5 -6 -2.5 -6 -4.5 0 -3 3.5 -5.5 8 -5.5 4.5 0 7.5 2 7.5 4"/>
<path d="M14 182 c-1.5 1 -1 2.5 0.5 2.8"/>
<!-- pen (moved) -->
</g>

<!-- pens -->
<path d="M12.6 210.4 L15.4 202.4 L19.9 199 L23.7 199.7 L24 203.8 L21.6 207 Z" fill="#c8c8c8"/>
<path d="M22 195.2 L28.8 199 L27.1 201.4 L20.5 197.6 Z" fill="#c8c8c8"/>
<path d="M12.9 210 L19.2 203.8" stroke="#333" stroke-width="0.7"/><circle cx="19.2" cy="203.6" r="1" fill="#222"/>
<path d="M13.6 234.6 L16.4 226.6 L20.9 223.2 L24.7 223.9 L25 228 L22.6 231.2 Z" fill="#c8c8c8"/>
<path d="M23 219.4 L29.8 223.2 L28.1 225.6 L21.5 221.8 Z" fill="#c8c8c8"/>
<path d="M13.9 234.2 L20.2 228" stroke="#333" stroke-width="0.7"/><circle cx="20.2" cy="227.8" r="1" fill="#222"/>
<path d="M11.8 221.4 C12.5 226 9.5 230 10.4 232.8 C11 234.5 12.5 235 14 234.9" fill="none" stroke="#c8c8c8" stroke-width="1.1"/>
<g fill="#c2c2c2">
<!-- type -->
<path d="M13 243.8 h13 v3.6 h-0.9 c-0.3 -1.6 -0.8 -2.4 -2.6 -2.4 h-2.2 v10.2 c0 0.9 0.4 1.1 1.8 1.2 v0.6 h-6.2 v-0.6 c1.4 -0.1 1.8 -0.3 1.8 -1.2 v-10.2 h-2.2 c-1.8 0 -2.3 0.8 -2.6 2.4 h-0.9 z" fill="#c8c8c8"/>
<!-- line -->
<path d="M12.5 282 L26.5 268.5 L27.3 269.3 L13.3 282.8 Z"/>
</g>
<!-- rect -->
<rect x="12.5" y="291.5" width="14" height="11" fill="#6a6a6a" stroke="#c6c6c6" stroke-width="1.1"/>
<g fill="#c2c2c2">
<!-- brush -->
<path d="M18 322.5 l8.5 -8.5 1 1 -8 9z"/>
<path d="M11.5 328.5 c2 0 3.5 -1 4 -4 1 -1.5 3 -1 3.5 0.5 0.5 2 -1 4 -7.5 3.5z"/>
</g>
<!-- blob brush -->
<circle cx="15.5" cy="346" r="4.5" fill="none" stroke="#c6c6c6" stroke-width="1.3"/>
<path d="M17.5 350.5 l8.5 -9 2 2 -8.5 9z" fill="#c2c2c2"/>
<!-- eraser -->
<path d="M12.5 372 l5 -6 h9 l-1 5 -4 5 h-9z" fill="#9a9a9a" stroke="#d0d0d0" stroke-width="1"/>
<path d="M12.5 372 h9 l5 -6" fill="none" stroke="#d0d0d0" stroke-width="0.8"/>
<!-- rotate -->
<path d="M15 391 a7 7 0 1 0 7 -1.5" fill="none" stroke="#c6c6c6" stroke-width="1.2" stroke-dasharray="2 1.2"/>
<path d="M13 389 l4.5 -2.5 -0.5 5z" fill="#c6c6c6"/>
<!-- scale -->
<rect x="16" y="414.5" width="11.5" height="10.5" fill="none" stroke="#c6c6c6" stroke-width="1.1"/>
<rect x="11.5" y="419.5" width="8" height="7.5" fill="#4a4a4a" stroke="#c6c6c6" stroke-width="1.1"/>
<path d="M20 421 l5.5 -5 M22 416 h3.5 v3.5" fill="none" stroke="#c6c6c6" stroke-width="1.1"/>
<!-- puppet/warp -->
<path d="M12 450 c3 -2 5 -6 10 -8 3 -1 5 1 6 3 -2 -1 -4 0 -4 2 -1 3 -6 5 -12 3z" fill="#b6b6b6"/>
<circle cx="16.5" cy="445" r="1.6" fill="#e0e0e0"/><circle cx="11.5" cy="450.5" r="1.3" fill="#e0e0e0"/><circle cx="21.5" cy="441" r="1.3" fill="#e0e0e0"/>
<!-- free transform -->
<path d="M11.5 459 L11.5 470 L14.5 467.5 L16.5 472 L18 471 L16 467 L20 466.5 Z" fill="#c2c2c2"/>
<rect x="17" y="462.5" width="10.5" height="9.5" fill="none" stroke="#c6c6c6" stroke-width="1.1" stroke-dasharray="2 1.3"/>
<!-- shape builder -->
<circle cx="15" cy="489" r="5" fill="none" stroke="#c6c6c6" stroke-width="1.1"/>
<circle cx="20" cy="489" r="5" fill="none" stroke="#c6c6c6" stroke-width="1.1"/>
<path d="M10.5 489 h10" stroke="#e0e0e0" stroke-width="1" stroke-dasharray="1 1"/>
<path d="M19 487 L19 498 L22 495.5 L24 499.5 L25.5 499 L23.5 495 L28 494.5 Z" fill="#c2c2c2"/>
<!-- perspective -->
<path d="M12 509 v16 h15 v-2 h-12 v-14z" fill="#c6c6c6"/>
<path d="M15.5 511 v12 M18.5 513 v10 M21.5 515 v8 M24.5 518 v5 M15 522 h12 M15 518 h9 M15 514 h5" stroke="#c6c6c6" stroke-width="1" fill="none"/>
<!-- mesh -->
<rect x="12" y="536.5" width="15" height="13" fill="#5a5a5a" stroke="#c6c6c6" stroke-width="1.1"/>
<path d="M12 541 c4 0 7 4 15 2 M12 546 c5 -2 9 2 15 0 M17 536.5 c0 4 -2 8 2 13 M22 536.5 c-2 4 2 8 0 13" fill="none" stroke="#c6c6c6" stroke-width="0.9"/>
<!-- gradient -->
<rect x="12" y="561" width="15" height="12" fill="url(#gr2)" stroke="#c6c6c6" stroke-width="1.1"/>
<!-- eyedropper -->
<path d="M13 597 l8 -8 3 3 -8 8 -3 0z" fill="none" stroke="#c6c6c6" stroke-width="1.1"/>
<path d="M21 585.5 l2 -2 3.5 3.5 -2 2 1 1 -2 2 -5.5 -5.5 2 -2z" fill="#c6c6c6"/>
<!-- blend -->
<rect x="11" y="607" width="8" height="8" fill="#b8b8b8"/>
<rect x="13.5" y="609.5" width="8" height="8" fill="#888" stroke="#c6c6c6" stroke-width="1"/>
<circle cx="24" cy="617.5" r="4.5" fill="#5e5e5e" stroke="#c6c6c6" stroke-width="1.2"/>
<!-- symbol sprayer -->
<g fill="#c6c6c6"><circle cx="12" cy="633.5" r="0.6"/><circle cx="14" cy="633.5" r="0.6"/><circle cx="16" cy="633.5" r="0.6"/><circle cx="13" cy="635" r="0.6"/><circle cx="15" cy="635" r="0.6"/><circle cx="12" cy="636.5" r="0.6"/><circle cx="14" cy="636.5" r="0.6"/><rect x="21" y="633.5" width="4" height="3"/></g>
<rect x="18.5" y="637" width="9" height="10.5" fill="none" stroke="#c6c6c6" stroke-width="1.1"/>
<circle cx="23" cy="642.3" r="2.3" fill="none" stroke="#c6c6c6" stroke-width="1.4"/>
<!-- graph -->
<path d="M12 657 v14 h15" fill="none" stroke="#c6c6c6" stroke-width="1"/>
<rect x="14" y="663" width="3" height="7.5" fill="none" stroke="#c6c6c6" stroke-width="1"/>
<rect x="19" y="660" width="3" height="10.5" fill="#8a8a8a"/>
<rect x="24" y="662" width="3" height="8.5" fill="none" stroke="#c6c6c6" stroke-width="1"/>
<!-- artboard -->
<rect x="14" y="686" width="11.5" height="9.5" fill="#777" stroke="#d0d0d0" stroke-width="1.1"/>
<path d="M10 686h2.5 M27 686h2.5 M10 695.5h2.5 M27 695.5h2.5 M14 682v2.5 M25.5 682v2.5 M14 697.5v2.5 M25.5 697.5v2.5" stroke="#d0d0d0" stroke-width="1"/>
<!-- slice -->
<path d="M12 722 l9 -7 4 -4 -2 5z" fill="#c6c6c6"/>
<path d="M21 715 l2 -3 4 -1.5 -2 4z" fill="#888"/>

<!-- ===== RIGHT DOCK ===== -->
<rect x="1325" y="65" width="41" height="659" fill="#262626"/>
<rect x="1328" y="65" width="37.5" height="659" fill="#4a4a4a"/>
<rect x="1328" y="65" width="37.5" height="11.5" fill="#333"/>
<rect x="1328" y="76.5" width="37.5" height="1" fill="#262626"/>
<path d="M1358 68.5v5l-3.5-2.5z M1362 68.5v5l-3.5-2.5z" fill="#c8c8c8"/>
<g fill="#2a2a2a"><rect x="1328" y="173.5" width="37.5" height="2"/><rect x="1328" y="269.5" width="37.5" height="2"/><rect x="1328" y="366.5" width="37.5" height="2"/><rect x="1328" y="435.5" width="37.5" height="2"/><rect x="1328" y="504.5" width="37.5" height="2"/></g>
<g fill="#111"><rect x="1337" y="80" width="1" height="4"/><rect x="1339" y="80" width="1" height="4"/><rect x="1341" y="80" width="1" height="4"/><rect x="1343" y="80" width="1" height="4"/><rect x="1345" y="80" width="1" height="4"/><rect x="1347" y="80" width="1" height="4"/><rect x="1349" y="80" width="1" height="4"/><rect x="1351" y="80" width="1" height="4"/><rect x="1353" y="80" width="1" height="4"/><rect x="1355" y="80" width="1" height="4"/><rect x="1337" y="176.5" width="1" height="4"/><rect x="1339" y="176.5" width="1" height="4"/><rect x="1341" y="176.5" width="1" height="4"/><rect x="1343" y="176.5" width="1" height="4"/><rect x="1345" y="176.5" width="1" height="4"/><rect x="1347" y="176.5" width="1" height="4"/><rect x="1349" y="176.5" width="1" height="4"/><rect x="1351" y="176.5" width="1" height="4"/><rect x="1353" y="176.5" width="1" height="4"/><rect x="1355" y="176.5" width="1" height="4"/><rect x="1337" y="273" width="1" height="4"/><rect x="1339" y="273" width="1" height="4"/><rect x="1341" y="273" width="1" height="4"/><rect x="1343" y="273" width="1" height="4"/><rect x="1345" y="273" width="1" height="4"/><rect x="1347" y="273" width="1" height="4"/><rect x="1349" y="273" width="1" height="4"/><rect x="1351" y="273" width="1" height="4"/><rect x="1353" y="273" width="1" height="4"/><rect x="1355" y="273" width="1" height="4"/><rect x="1337" y="371" width="1" height="4"/><rect x="1339" y="371" width="1" height="4"/><rect x="1341" y="371" width="1" height="4"/><rect x="1343" y="371" width="1" height="4"/><rect x="1345" y="371" width="1" height="4"/><rect x="1347" y="371" width="1" height="4"/><rect x="1349" y="371" width="1" height="4"/><rect x="1351" y="371" width="1" height="4"/><rect x="1353" y="371" width="1" height="4"/><rect x="1355" y="371" width="1" height="4"/><rect x="1337" y="440" width="1" height="4"/><rect x="1339" y="440" width="1" height="4"/><rect x="1341" y="440" width="1" height="4"/><rect x="1343" y="440" width="1" height="4"/><rect x="1345" y="440" width="1" height="4"/><rect x="1347" y="440" width="1" height="4"/><rect x="1349" y="440" width="1" height="4"/><rect x="1351" y="440" width="1" height="4"/><rect x="1353" y="440" width="1" height="4"/><rect x="1355" y="440" width="1" height="4"/></g>
<!-- palette -->
<path d="M1347 92.6c6 0 10.7 3 10.7 7 0 3-3 3.5-4.5 3.5-1.3 0-1.5 1.2-0.5 2.2 0.8 1-0.5 2.6-5 2.6-6 0-10.3-3-10.3-7.5s4.3-7.8 9.6-7.8z" fill="#c4c4c4"/>
<g fill="#4a4a4a"><circle cx="1341" cy="100.5" r="1.6"/><circle cx="1346" cy="104.4" r="1.5"/><circle cx="1351" cy="104" r="1.4"/><circle cx="1354.5" cy="100" r="1.3"/><circle cx="1351.8" cy="96" r="1.1"/></g>
<!-- color guide -->
<path d="M1339.2 120v16.6h16.6a16.6 16.6 0 0 0 -16.6 -16.6z" fill="#9a9a9a" stroke="#d2d2d2" stroke-width="1"/>
<path d="M1339.7 136.2 L1340 120.5 L1343.5 121 Z" fill="#d8d8d8"/>
<path d="M1339.7 136.2 L1343.5 121 L1348 123 Z" fill="#bdbdbd"/>
<path d="M1339.7 136.2 L1348 123 L1352 126.5 Z" fill="#8f8f8f"/>
<path d="M1339.7 136.2 L1352 126.5 L1354.5 131 Z" fill="#666"/>
<path d="M1339.7 136.2 L1354.5 131 L1355.3 136.2 Z" fill="#333"/>
<!-- color link -->
<g fill="#cfcfcf"><circle cx="1344.7" cy="156.5" r="2.3"/><circle cx="1353.3" cy="148.5" r="2.6"/><circle cx="1353.3" cy="164.3" r="2.6"/></g>
<path d="M1344.7 156.5 L1353.3 148.5 M1344.7 156.5 L1353.3 164.3" stroke="#cfcfcf" stroke-width="1.3"/>
<path d="M1350 150.5 a7 7 0 1 0 0 12" fill="none" stroke="#cfcfcf" stroke-width="1.3"/>
<!-- swatches grid -->
<rect x="1338.5" y="190.5" width="17" height="12" fill="#d0d0d0"/>
<g><rect x="1339.5" y="191.5" width="4.5" height="4.5" fill="#333"/><rect x="1345" y="191.5" width="4.5" height="4.5" fill="#666"/><rect x="1350.5" y="191.5" width="4.5" height="4.5" fill="#999"/><rect x="1339.5" y="197" width="4.5" height="4.5" fill="#888"/><rect x="1345" y="197" width="4.5" height="4.5" fill="#aaa"/><rect x="1350.5" y="197" width="4.5" height="4.5" fill="#555"/></g>
<!-- brushes -->
<g fill="#c4c4c4"><rect x="1343" y="224" width="8" height="9"/><path d="M1341 215l4 1 1 8h-1z M1347 213l1.5 0 0 11h-1.5z M1353 216l2 2-5 6h-1z"/></g>
<!-- club -->
<g fill="#c8c8c8"><circle cx="1347" cy="247.5" r="3.6"/><circle cx="1343" cy="253.5" r="3.6"/><circle cx="1351" cy="253.5" r="3.6"/><path d="M1346 254h2l1.5 5h-5z"/><rect x="1342.5" y="258.5" width="9" height="1.2"/></g>
<!-- stroke -->
<g fill="#cfcfcf"><rect x="1338.5" y="287" width="17" height="1.5"/><rect x="1338.5" y="291" width="17" height="2"/><rect x="1338.5" y="295.5" width="17" height="2.5"/></g>
<!-- gradient -->
<defs><linearGradient id="gr1" x1="0" x2="1" y1="0" y2="0"><stop offset="0" stop-color="#1e1e1e"/><stop offset="1" stop-color="#e0e0e0"/></linearGradient>
<linearGradient id="gr2" x1="0" x2="1" y1="0" y2="1"><stop offset="0" stop-color="#2a2a2a"/><stop offset="1" stop-color="#d8d8d8"/></linearGradient></defs>
<rect x="1339" y="316" width="17" height="11.5" fill="url(#gr1)" stroke="#d0d0d0" stroke-width="1"/>
<!-- transparency -->
<circle cx="1345.5" cy="348" r="5.5" fill="#bdbdbd"/>
<circle cx="1349.5" cy="353" r="5.5" fill="#7a7a7a" fill-opacity="0.6" stroke="#d6d6d6" stroke-width="1.2"/>
<!-- appearance -->
<circle cx="1347.6" cy="391" r="5.6" fill="#c4c4c4"/>
<circle cx="1347.6" cy="391" r="8" fill="none" stroke="#d0d0d0" stroke-width="1.2" stroke-dasharray="2 1.3"/>
<!-- transform -->
<rect x="1344" y="412.5" width="12" height="12" fill="none" stroke="#d0d0d0" stroke-width="1.2"/>
<rect x="1339.5" y="419.5" width="5" height="5" fill="#4a4a4a" stroke="#d0d0d0" stroke-width="1.2"/>
<rect x="1341.5" y="421.5" width="5" height="5" fill="#bdbdbd"/>
<!-- layers selected -->
<rect x="1332" y="448.4" width="29" height="23.2" rx="2.5" fill="#333"/>
<path d="M1347 452.5 l7.5 4.3 -7.5 4.3 -7.5 -4.3z" fill="#d4d4d4"/>
<path d="M1341.5 460 l-2 1.2 7.5 4.3 7.5 -4.3 -2 -1.2 -5.5 3.2z" fill="#b0b0b0"/>
<!-- artboards -->
<rect x="1338.2" y="479.2" width="10" height="10.5" fill="none" stroke="#d0d0d0" stroke-width="1.2"/>
<rect x="1342.5" y="485" width="13.5" height="11.5" fill="#4a4a4a" stroke="#d0d0d0" stroke-width="1.2"/>

<!-- ===== SWATCHES ===== -->
<rect x="955" y="242" width="154" height="194" fill="#ffffff"/>
<rect x="955" y="208.7" width="154" height="33.8" fill="#213460"/>
<rect x="955" y="246.6" width="154" height="34.3" fill="#425667"/>
<rect x="955" y="284.2" width="154" height="34.5" fill="#1b79a9"/>
<rect x="955" y="322.8" width="154" height="34.2" fill="#7b9ac9"/>
<rect x="955" y="360.8" width="154" height="34.5" fill="#cbd4d2"/>
<rect x="955" y="398.8" width="154" height="34.2" fill="#808c91"/>
<rect x="955" y="436" width="154" height="33.5" fill="#7fb0aa"/>

<!-- ===== V SCROLLBAR ===== -->
<rect x="1309" y="85" width="16" height="626" fill="#333333"/>
<path d="M1312.7 97h10l-5 -6z" fill="#dedede"/>
<rect x="1310" y="392.7" width="15" height="15.5" fill="#9c9c9c"/>
<path d="M1312.4 699h10l-5 6.3z" fill="#dedede"/>

<!-- ===== LAYERS PANEL ===== -->
<rect x="1081" y="436" width="246" height="212" fill="#000" opacity="0.08"/>
<rect x="1083" y="435" width="244" height="210" fill="#000" opacity="0.12"/>
<rect x="1085" y="434" width="241.5" height="208.5" fill="#4a4a4a" stroke="#1c1c1c" stroke-width="1"/>
<rect x="1085.5" y="434.5" width="240.5" height="20.5" fill="#333333"/>
<rect x="1085.5" y="434.5" width="240.5" height="3" fill="#232323"/>
<rect x="1086.5" y="438" width="40.5" height="17" fill="#4a4a4a"/>
<rect x="1086.5" y="438" width="40.5" height="1" fill="#555"/>
<rect x="1127" y="438" width="1" height="17" fill="#232323"/>
<rect x="1219.5" y="438" width="1" height="17" fill="#232323"/>
<text class="ct" x="1093" y="450.2" textLength="28" lengthAdjust="spacingAndGlyphs">Capas</text>
<text x="1134.4" y="450.2" font-size="10px" fill="#9aa0a8" textLength="77.4" lengthAdjust="spacingAndGlyphs">Mesas de trabajo</text>
<path d="M1286 443.7v6.5l4.5-3.25z M1291 443.7v6.5l4.5-3.25z" fill="#c8c8c8"/>
<rect x="1301" y="441" width="1" height="13" fill="#666"/>
<rect x="1303.5" y="441" width="1" height="13" fill="#666"/>
<path d="M1308 444.5h5l-2.5 3z" fill="#d0d0d0"/>
<g fill="#d0d0d0"><rect x="1313.5" y="443" width="9" height="1"/><rect x="1313.5" y="445.3" width="9" height="1"/><rect x="1313.5" y="447.6" width="9" height="1"/><rect x="1313.5" y="449.9" width="9" height="1"/></g>
<rect x="1091.5" y="461.5" width="229.5" height="153" fill="#4a4a4a" stroke="#2e2e2e" stroke-width="1"/>
<rect x="1092" y="483" width="228.5" height="20.5" fill="#5a6576"/>
<g fill="#333"><rect x="1092" y="482.3" width="228.5" height="1"/><rect x="1092" y="503.2" width="228.5" height="1"/><rect x="1092" y="523.8" width="228.5" height="1"/>
<rect x="1112" y="462" width="1" height="62"/><rect x="1133" y="462" width="1" height="62"/><rect x="1139" y="462" width="1" height="62"/><rect x="1285.5" y="462" width="1" height="62"/></g>
<rect x="1134.7" y="463.5" width="3.5" height="18" fill="#e84545"/>
<rect x="1134.7" y="484.5" width="3.5" height="18" fill="#41dd41"/>
<rect x="1134.7" y="505.5" width="3.5" height="17.5" fill="#4178e6"/>
<g fill="#c9c9c9"><path d="M1145 468.4v7.4l6.4-3.7z"/><path d="M1145 489.3v7.4l6.4-3.7z"/><path d="M1145 510.2v7.4l6.4-3.7z"/></g>
<g><path d="M1095 472.3 q6 -7 12 0 q-6 6 -12 0z" fill="#bdbdbd"/><circle cx="1101" cy="472.3" r="2.6" fill="#3a3a3a"/><circle cx="1101.8" cy="471.3" r="0.8" fill="#bbb"/>
<path d="M1095 493.2 q6 -7 12 0 q-6 6 -12 0z" fill="#bdbdbd"/><circle cx="1101" cy="493.2" r="2.6" fill="#3a3a3a"/><circle cx="1101.8" cy="492.2" r="0.8" fill="#bbb"/></g>
<g><path d="M1120.3 471 v-2 a2.5 2.5 0 0 1 5 0 v2" fill="none" stroke="#b8b8b8" stroke-width="1.4"/><rect x="1118.7" y="470.8" width="8.2" height="6" fill="#b8b8b8"/><rect x="1122.2" y="473" width="1.2" height="1.6" fill="#444"/>
<path d="M1120.3 512.5 v-2 a2.5 2.5 0 0 1 5 0 v2" fill="none" stroke="#b8b8b8" stroke-width="1.4"/><rect x="1118.7" y="512.3" width="8.2" height="6" fill="#b8b8b8"/><rect x="1122.2" y="514.5" width="1.2" height="1.6" fill="#444"/></g>
<rect x="1161.5" y="463.3" width="17" height="17" fill="#fff" stroke="#000" stroke-width="1.4"/>
<rect x="1161.5" y="484.2" width="17" height="17" fill="#fff" stroke="#000" stroke-width="1.4"/>
<rect x="1161.5" y="505.1" width="17" height="17" fill="#fff" stroke="#000" stroke-width="1.4"/>
<g fill="#5a5a5a"><ellipse cx="1170.8" cy="466.8" rx="3.4" ry="3"/><rect x="1169" y="469.5" width="4" height="6.5"/><path d="M1164.3 469.3 l0.8 -0.6 3.8 3.4 -0.4 1.1z M1175.8 468 l0.8 0.4 -3 4.3 -0.8 -0.6z"/><rect x="1169.3" y="476" width="1.2" height="3.6"/><rect x="1171.6" y="476" width="1.2" height="3.6"/></g><g fill="#222"><circle cx="1170" cy="466.5" r="0.7"/><circle cx="1172" cy="466.5" r="0.7"/><rect x="1170" y="471" width="2" height="0.8"/></g>
<g fill="#aaa" opacity="0.7"><circle cx="1168" cy="509" r="0.4"/><circle cx="1171" cy="511" r="0.4"/><circle cx="1169" cy="514" r="0.4"/><circle cx="1172" cy="516" r="0.4"/><circle cx="1167" cy="517" r="0.4"/><circle cx="1173" cy="512" r="0.4"/></g>
<text class="ct" x="1184" y="476" textLength="27.8" lengthAdjust="spacingAndGlyphs">Trazos</text>
<text class="ct" x="1184" y="497" textLength="23" lengthAdjust="spacingAndGlyphs">Color</text>
<text class="ct" x="1184" y="518" textLength="30.5" lengthAdjust="spacingAndGlyphs">Boceto</text>
<g fill="none" stroke="#c4c4c4" stroke-width="1.1"><circle cx="1295.4" cy="472.3" r="4.3"/><circle cx="1295.4" cy="493.2" r="4.3"/><circle cx="1295.4" cy="514.1" r="4.3"/></g>
<path d="M1314 484h6v6z" fill="#dcdcdc"/>
<text class="ct" x="1091" y="629" textLength="34" lengthAdjust="spacingAndGlyphs">3 capas</text>
<g fill="none" stroke="#6a6a6a" stroke-width="1.2"><circle cx="1189.5" cy="623" r="3.2"/><path d="M1187 625.5l-3.5 3.5"/><rect x="1209.5" y="619.5" width="6" height="6"/><rect x="1212.5" y="622.5" width="6" height="6"/></g>
<g fill="#cfcfcf"><path d="M1235 622h3v-3h1v4h-4z"/><path d="M1239 619h8v9h-4l-3 -3z"/><path d="M1261 620h8v9h-5l-3-3z"/><path d="M1287 620.5h10v1.5h-10z M1290.5 619h3v1.5h-3z M1288 623h8l-0.8 6h-6.4z"/></g>
<g fill="#888"><circle cx="1323" cy="623" r="0.6"/><circle cx="1321" cy="625" r="0.6"/><circle cx="1323" cy="625" r="0.6"/><circle cx="1319" cy="627" r="0.6"/><circle cx="1321" cy="627" r="0.6"/><circle cx="1323" cy="627" r="0.6"/></g>
<rect x="1085.5" y="634" width="240.5" height="1" fill="#232323"/>
<rect x="1085.5" y="635" width="240.5" height="7" fill="#444"/>
<g fill="#111"><rect x="1196" y="636" width="1" height="4"/><rect x="1198" y="636" width="1" height="4"/><rect x="1200" y="636" width="1" height="4"/><rect x="1202" y="636" width="1" height="4"/><rect x="1204" y="636" width="1" height="4"/><rect x="1206" y="636" width="1" height="4"/><rect x="1208" y="636" width="1" height="4"/><rect x="1210" y="636" width="1" height="4"/><rect x="1212" y="636" width="1" height="4"/><rect x="1214" y="636" width="1" height="4"/></g>

<!-- ===== STATUS BAR ===== -->
<rect x="42" y="711" width="1283" height="13" fill="#4a4a4a"/>
<rect x="42" y="711" width="1283" height="1" fill="#2c2c2c"/>
<rect x="505" y="712" width="804" height="12" fill="#333333"/>
<rect x="1309" y="711" width="16" height="13" fill="#4a4a4a"/>
<rect x="901" y="712" width="15" height="12" fill="#a3a3a3"/>
<path d="M516.7 714.3v10.5l-6.3 -5.2z" fill="#dedede"/>
<path d="M1297 714.3v10.5l6.3 -5.2z" fill="#dedede"/>
<path d="M53 724v-9h4M54 724h10v-3M58 721c0-4 3-6 6-6v-2l4 3.5-4 3.5v-2c-2 0-5 1-6 3" fill="none" stroke="#cfcfcf" stroke-width="1.3"/>
<rect x="76.5" y="712.5" width="67" height="12" fill="#555" stroke="#2a2a2a"/>
<rect x="77" y="713" width="51" height="11" fill="#a6a6a6"/>
<text x="79" y="725.5" font-size="10px" fill="#111" textLength="35" lengthAdjust="spacingAndGlyphs">52,21%</text>
<path d="M132 716.5h8l-4 4.5z" fill="#dedede"/>
<path d="M157 714v10M165 714v8l-5 -4z M176 714v8l-5 -4z" fill="#7a7a7a" stroke="#7a7a7a" stroke-width="1"/>
<rect x="186.5" y="712.5" width="57" height="12" fill="#555" stroke="#2a2a2a"/>
<rect x="187" y="713" width="43" height="11" fill="#a6a6a6"/>
<text x="190" y="725.5" font-size="10px" fill="#111">1</text>
<path d="M232 716.5h8l-4 4.5z" fill="#dedede"/>
<path d="M255 714v8l5 -4z M267 714v8l5 -4z M274 714v10" fill="#7a7a7a" stroke="#7a7a7a" stroke-width="1"/>
<rect x="285.5" y="712" width="1" height="12" fill="#3a3a3a"/>
<text class="ct" x="366" y="725.5" textLength="41" lengthAdjust="spacingAndGlyphs">Selección</text>
<rect x="486" y="712" width="1" height="12" fill="#3a3a3a"/>
<path d="M493 714v8l4.5 -4z" fill="#bdbdbd"/>

</svg>
</body></html>
